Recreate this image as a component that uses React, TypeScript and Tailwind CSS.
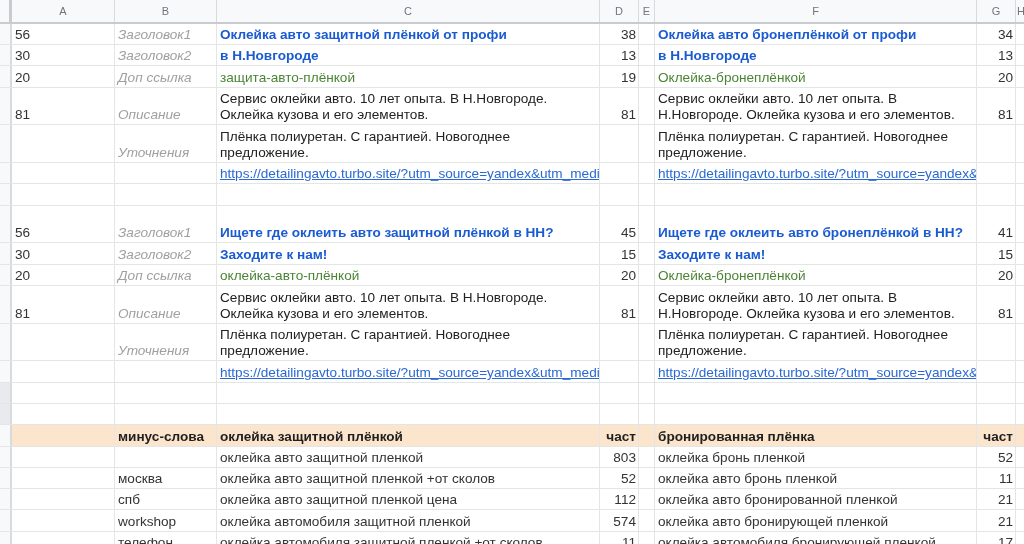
type Cell = { a?: string; b?: string; c?: React.ReactNode; d?: string; f?: React.ReactNode; g?: string }
type RowData = Cell & { h: string; kind?: "head" | "title" | "green" | "link" | "plain"; side?: string }

const urlC = "https://detailingavto.turbo.site/?utm_source=yandex&utm_medi"
const urlF = "https://detailingavto.turbo.site/?utm_source=yandex&"

const rows: RowData[] = [
  { h: "h-[21px]", kind: "title", a: "56", b: "Заголовок1", c: "Оклейка авто защитной плёнкой от профи", d: "38", f: "Оклейка авто бронеплёнкой от профи", g: "34" },
  { h: "h-[21px]", kind: "title", a: "30", b: "Заголовок2", c: "в Н.Новгороде", d: "13", f: "в Н.Новгороде", g: "13" },
  { h: "h-[22px]", kind: "green", a: "20", b: "Доп ссылка", c: "защита-авто-плёнкой", d: "19", f: "Оклейка-бронеплёнкой", g: "20" },
  { h: "h-[37px]", a: "81", b: "Описание", c: "Сервис оклейки авто. 10 лет опыта. В Н.Новгороде. Оклейка кузова и его элементов.", d: "81", f: "Сервис оклейки авто. 10 лет опыта. В Н.Новгороде. Оклейка кузова и его элементов.", g: "81" },
  { h: "h-[38px]", b: "Уточнения", c: "Плёнка полиуретан. С гарантией. Новогоднее предложение.", f: "Плёнка полиуретан. С гарантией. Новогоднее предложение." },
  { h: "h-[21px]", kind: "link", c: urlC, f: urlF },
  { h: "h-[22px]" },
  { h: "h-[37px]", kind: "title", a: "56", b: "Заголовок1", c: "Ищете где оклеить авто защитной плёнкой в НН?", d: "45", f: "Ищете где оклеить авто бронеплёнкой в НН?", g: "41" },
  { h: "h-[22px]", kind: "title", a: "30", b: "Заголовок2", c: "Заходите к нам!", d: "15", f: "Заходите к нам!", g: "15" },
  { h: "h-[21px]", kind: "green", a: "20", b: "Доп ссылка", c: "оклейка-авто-плёнкой", d: "20", f: "Оклейка-бронеплёнкой", g: "20" },
  { h: "h-[38px]", a: "81", b: "Описание", c: "Сервис оклейки авто. 10 лет опыта. В Н.Новгороде. Оклейка кузова и его элементов.", d: "81", f: "Сервис оклейки авто. 10 лет опыта. В Н.Новгороде. Оклейка кузова и его элементов.", g: "81" },
  { h: "h-[37px]", b: "Уточнения", c: "Плёнка полиуретан. С гарантией. Новогоднее предложение.", f: "Плёнка полиуретан. С гарантией. Новогоднее предложение." },
  { h: "h-[22px]", kind: "link", c: urlC, f: urlF },
  { h: "h-[21px]", side: "bg-[#e8eaed]" },
  { h: "h-[21px]", side: "bg-[#e8eaed]" },
  { h: "h-[22px]", kind: "head", b: "минус-слова", c: "оклейка защитной плёнкой", d: "част", f: "бронированная плёнка", g: "част" },
  { h: "h-[21px]", kind: "plain", c: "оклейка авто защитной пленкой", d: "803", f: "оклейка бронь пленкой", g: "52" },
  { h: "h-[21px]", kind: "plain", b: "москва", c: "оклейка авто защитной пленкой +от сколов", d: "52", f: "оклейка авто бронь пленкой", g: "11" },
  { h: "h-[21px]", kind: "plain", b: "спб", c: "оклейка авто защитной пленкой цена", d: "112", f: "оклейка авто бронированной пленкой", g: "21" },
  { h: "h-[22px]", kind: "plain", b: "workshop", c: "оклейка автомобиля защитной пленкой", d: "574", f: "оклейка авто бронирующей пленкой", g: "21" },
  { h: "h-[21px]", kind: "plain", b: "телефон", c: "оклейка автомобиля защитной пленкой +от сколов", d: "11", f: "оклейка автомобиля бронирующей пленкой", g: "17" },
]

const cellBase = "flex items-end shrink-0 h-full border-r border-[#e4e5e5] pb-[1px] leading-[16px]"

const textClass = (kind?: RowData["kind"]) => {
  if (kind === "title") return "font-bold text-[#1a5bd2] whitespace-nowrap"
  if (kind === "green") return "text-[#4a8434] whitespace-nowrap"
  if (kind === "link") return "text-[#2a68d4] underline whitespace-nowrap"
  if (kind === "head") return "font-bold text-[#1f1f1f] whitespace-nowrap"
  if (kind === "plain") return "text-[#333333] whitespace-nowrap"
  return "text-[#222222]"
}

const SheetRow = ({ row }: { row: RowData }) => {
  const head = row.kind === "head"
  const num = head ? "font-bold text-[#1f1f1f]" : "text-[#333333]"
  const fill = head ? "bg-[#fce5cd]" : ""
  return (
    <div className={`flex ${row.h} border-b border-[#e4e5e5] text-[13.6px]`}>
      <div className={`w-[12px] shrink-0 border-r-2 border-[#d8dadc] ${row.side ?? "bg-[#f8f9fa]"}`}></div>
      <div className={`${cellBase} ${fill} w-[103px] pl-[3px] text-[#333333]`}>{row.a}</div>
      <div className={`${cellBase} ${fill} w-[102px] pl-[3px] whitespace-nowrap ${head ? "font-bold text-[#1f1f1f]" : row.kind === "plain" ? "text-[#333333]" : "italic text-[#a0a0a0]"}`}>{row.b}</div>
      <div className={`${cellBase} ${fill} w-[383px] pl-[3px] overflow-hidden ${textClass(row.kind)}`}>{row.c}</div>
      <div className={`${cellBase} ${fill} w-[39px] justify-end pr-[2px] ${num}`}>{row.d}</div>
      <div className={`${cellBase} ${fill} w-[16px]`}></div>
      <div className={`${cellBase} ${fill} w-[322px] pl-[3px] overflow-hidden ${textClass(row.kind)}`}>{row.f}</div>
      <div className={`${cellBase} ${fill} w-[39px] justify-end pr-[2px] ${num}`}>{row.g}</div>
      <div className={`h-full flex-1 ${fill}`}></div>
    </div>
  )
}

const columns = [
  { label: "A", w: "w-[103px]" },
  { label: "B", w: "w-[102px]" },
  { label: "C", w: "w-[383px]" },
  { label: "D", w: "w-[39px]" },
  { label: "E", w: "w-[16px]" },
  { label: "F", w: "w-[322px]" },
  { label: "G", w: "w-[39px]" },
]

const App = () => {
  return (
    <div className="h-[544px] w-[1024px] overflow-hidden bg-white blur-[0.45px] font-['Liberation_Sans',Arial,sans-serif]">
      <div className="flex h-[24px] border-b-2 border-[#c9cbce] bg-[#f8f9fa] text-[11px] text-[#70757a]">
        <div className="w-[12px] shrink-0 border-r-[3px] border-[#c9cbce]"></div>
        {columns.map((col) => (
          <div key={col.label} className={`${col.w} flex shrink-0 items-center justify-center border-r border-[#d9dadc]`}>
            {col.label}
          </div>
        ))}
        <div className="flex-1 overflow-hidden pl-[1px] leading-[22px]">H</div>
      </div>
      {rows.map((row, i) => (
        <SheetRow key={i} row={row} />
      ))}
    </div>
  )
}

export default App
